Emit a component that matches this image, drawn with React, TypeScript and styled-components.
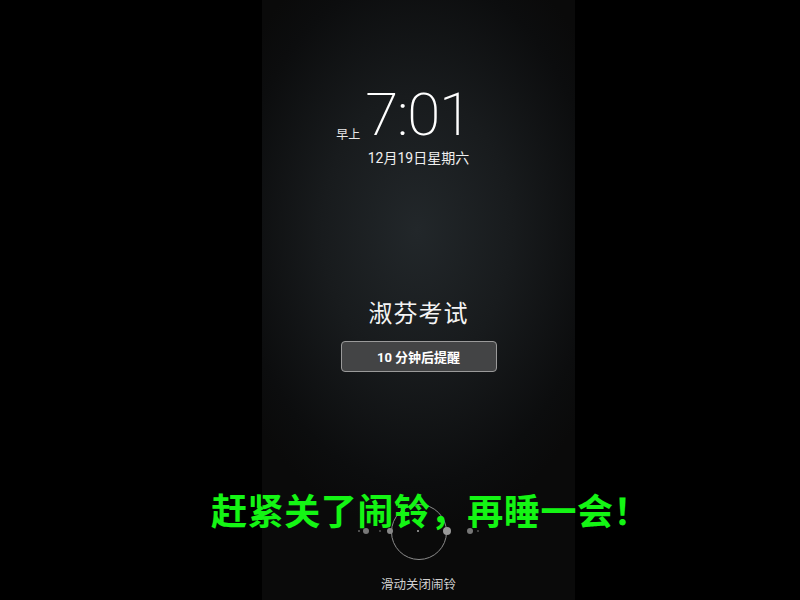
import React from "react";
import styled, { createGlobalStyle } from "styled-components";

const Global = createGlobalStyle`
  html, body { margin: 0; padding: 0; background: #000; }
  body { width: 800px; height: 600px; overflow: hidden; font-family: Roboto, "Noto Sans CJK SC", sans-serif; }
`;

const Page = styled.div`
  position: relative;
  width: 800px;
  height: 600px;
  background: #000;
  display: flex;
  justify-content: center;
`;

const Phone = styled.div`
  width: 313px;
  height: 600px;
  margin-left: 37px;
  background: radial-gradient(ellipse 210px 300px at 155px 230px, #22272a 0%, #181b1d 45%, #0c0d0e 85%, #0a0a0a 100%);
  display: flex;
  flex-direction: column;
  align-items: center;
  color: #fff;
`;

const ClockRow = styled.div`
  margin-top: 85px;
  display: flex;
  align-items: flex-end;
  margin-left: -30px;
`;

const AmPm = styled.span`
  font-family: "Noto Sans CJK SC", sans-serif;
  font-size: 12px;
  line-height: 12px;
  color: #e8e8e8;
  margin-right: 5px;
  margin-bottom: 5px;
`;

const Time = styled.span`
  font-family: Roboto, sans-serif;
  font-weight: 200;
  font-size: 60px;
  line-height: 60px;
  letter-spacing: -1.2px;
  color: #fff;
`;

const DateText = styled.div`
  margin-top: 5px;
  font-family: Roboto, "Noto Sans CJK SC", sans-serif;
  font-size: 14px;
  line-height: 16px;
  color: #f0f0f0;
`;

const Title = styled.div`
  margin-top: 131px;
  font-family: "Noto Sans CJK SC", sans-serif;
  font-size: 24px;
  line-height: 30px;
  color: #f4f4f4;
  letter-spacing: 1px;
`;

const SnoozeButton = styled.button`
  margin-top: 14px;
  width: 156px;
  height: 31px;
  border: 1px solid #9a9a9a;
  border-radius: 4px;
  background: #434445;
  color: #fff;
  font-family: Roboto, "Noto Sans CJK SC", sans-serif;
  font-weight: 700;
  font-size: 13px;
  padding: 0;
  display: flex;
  align-items: center;
  justify-content: center;
`;

const Spacer = styled.div`
  flex: 1;
`;

const Slider = styled.div`
  position: relative;
  width: 140px;
  height: 58px;
`;

const Ring = styled.div`
  position: absolute;
  left: 42px;
  top: 0;
  width: 54px;
  height: 54px;
  border: 1.5px solid #8a8a8a;
  border-radius: 50%;
`;

const Dot = styled.div<{ $x: number; $s: number; $c: string }>`
  position: absolute;
  left: ${(p) => p.$x - p.$s / 2}px;
  top: ${(p) => 27 - p.$s / 2}px;
  width: ${(p) => p.$s}px;
  height: ${(p) => p.$s}px;
  border-radius: 50%;
  background: ${(p) => p.$c};
`;

const Hint = styled.div`
  margin-top: 14px;
  margin-bottom: 8px;
  font-family: "Noto Sans CJK SC", sans-serif;
  font-size: 12.5px;
  line-height: 16px;
  color: #d0d0d0;
`;

const Overlay = styled.div`
  position: absolute;
  left: 211px;
  top: 487px;
  font-family: "Noto Sans CJK SC", sans-serif;
  font-weight: 700;
  font-size: 36px;
  line-height: 44px;
  color: #14f514;
  white-space: nowrap;
  letter-spacing: 0.6px;
`;

const dots: { x: number; s: number; c: string }[] = [
  { x: 10, s: 2, c: "#666" },
  { x: 17, s: 6, c: "#777" },
  { x: 31, s: 2, c: "#555" },
  { x: 41, s: 6, c: "#888" },
  { x: 69, s: 2, c: "#aaa" },
  { x: 98, s: 8, c: "#999" },
  { x: 121, s: 6, c: "#777" },
  { x: 129, s: 2, c: "#555" },
];

export default function App() {
  return (
    <>
      <Global />
      <Page>
        <Phone>
          <ClockRow>
            <AmPm>早上</AmPm>
            <Time>7:01</Time>
          </ClockRow>
          <DateText>12月19日星期六</DateText>
          <Title>淑芬考试</Title>
          <SnoozeButton>10 分钟后提醒</SnoozeButton>
          <Spacer />
          <Slider>
            <Ring />
            {dots.map((d, i) => (
              <Dot key={i} $x={d.x} $s={d.s} $c={d.c} />
            ))}
          </Slider>
          <Hint>滑动关闭闹铃</Hint>
        </Phone>
        <Overlay>赶紧关了闹铃，再睡一会！</Overlay>
      </Page>
    </>
  );
}
